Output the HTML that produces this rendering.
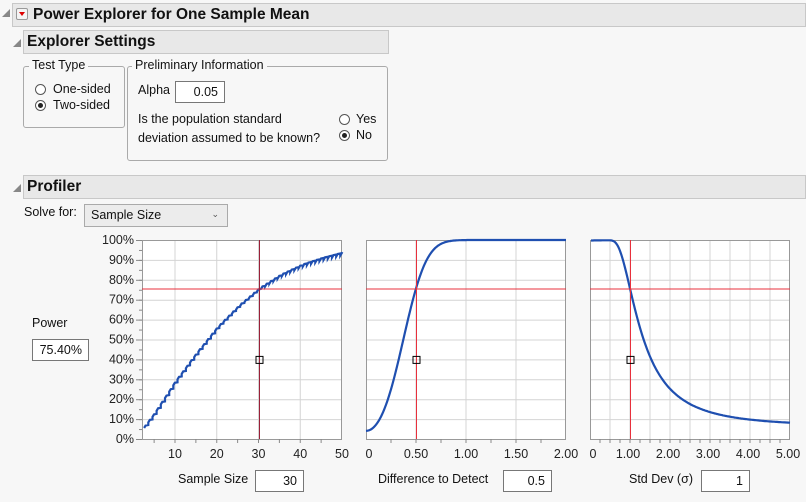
<!DOCTYPE html>
<html><head><meta charset="utf-8"><style>
body{margin:0;width:806px;height:502px;background:#f7f7f7;font-family:"Liberation Sans",sans-serif;font-size:12.5px;color:#111;position:relative;overflow:hidden}
.a{position:absolute}
.bar{position:absolute;background:#e8e8e8;border:1px solid #c8c8c8;font-weight:bold;box-sizing:border-box}
.tri{position:absolute;width:0;height:0;border-left:8px solid transparent;border-bottom:8px solid #888}
.box{position:absolute;background:#fff;border:1px solid #777;box-sizing:border-box;text-align:right;padding-right:6px}
.grp{position:absolute;border:1px solid #aaa;border-radius:3px;box-sizing:border-box}
.lg{position:absolute;background:#f7f7f7;padding:0 3px}
.rad{position:absolute;width:11px;height:11px;border:1px solid #555;border-radius:50%;background:#fff;box-sizing:border-box}
.rad.on::after{content:"";position:absolute;left:2px;top:2px;width:5px;height:5px;border-radius:50%;background:#222}
</style></head><body>
<div class="tri a" style="left:2px;top:9px"></div>
<div class="bar" style="left:12px;top:3px;width:794px;height:24px;font-size:15.5px;line-height:22px;padding-left:20px">Power Explorer for One Sample Mean</div>
<div class="a" style="left:16px;top:8px;width:12px;height:12px;border:1px solid #999;border-radius:2px;background:#f4f4f4;box-sizing:border-box"><div style="position:absolute;left:2px;top:3px;border-left:3px solid transparent;border-right:3px solid transparent;border-top:4px solid #d00"></div></div>
<div class="tri a" style="left:13px;top:39px"></div>
<div class="bar" style="left:23px;top:30px;width:366px;height:24px;font-size:15.5px;line-height:22px;padding-left:3px">Explorer Settings</div>

<div class="grp" style="left:23px;top:66px;width:102px;height:62px"></div>
<div class="lg" style="left:29px;top:58px">Test Type</div>
<div class="rad" style="left:35px;top:84px"></div><div class="a" style="left:53px;top:82px">One-sided</div>
<div class="rad on" style="left:35px;top:100px"></div><div class="a" style="left:53px;top:98px">Two-sided</div>

<div class="grp" style="left:127px;top:66px;width:261px;height:95px"></div>
<div class="lg" style="left:132px;top:58px">Preliminary Information</div>
<div class="a" style="left:138px;top:83px">Alpha</div>
<div class="box" style="left:175px;top:81px;width:50px;height:22px;line-height:20px">0.05</div>
<div class="a" style="left:138px;top:110px;line-height:19px">Is the population standard<br>deviation assumed to be known?</div>
<div class="rad" style="left:339px;top:114px"></div><div class="a" style="left:356px;top:112px">Yes</div>
<div class="rad on" style="left:339px;top:130px"></div><div class="a" style="left:356px;top:128px">No</div>

<div class="tri a" style="left:13px;top:184px"></div>
<div class="bar" style="left:23px;top:175px;width:783px;height:24px;font-size:15.5px;line-height:22px;padding-left:3px">Profiler</div>
<div class="a" style="left:24px;top:205px">Solve for:</div>
<div class="a" style="left:84px;top:204px;width:144px;height:23px;border:1px solid #aaa;background:#ececec;box-sizing:border-box;padding-left:6px;line-height:21px">Sample Size<span style="position:absolute;right:8px;top:-1px;font-size:9px;color:#555">&#8964;</span></div>

<div class="a" style="left:32px;top:316px">Power</div>
<div class="box" style="left:32px;top:339px;width:57px;height:22px;line-height:20px">75.40%</div>

<svg class="a" style="left:0;top:0" width="806" height="502" id="s"></svg>

<div class="a" style="left:178px;top:472px">Sample Size</div>
<div class="box" style="left:255px;top:470px;width:49px;height:22px;line-height:20px">30</div>
<div class="a" style="left:378px;top:472px">Difference to Detect</div>
<div class="box" style="left:503px;top:470px;width:49px;height:22px;line-height:20px">0.5</div>
<div class="a" style="left:629px;top:472px">Std Dev (σ)</div>
<div class="box" style="left:701px;top:470px;width:49px;height:22px;line-height:20px">1</div>

<script>
var s=document.getElementById('s'),h='';
function L(x1,y1,x2,y2,c,w){h+='<line x1="'+x1+'" y1="'+y1+'" x2="'+x2+'" y2="'+y2+'" stroke="'+c+'" stroke-width="'+(w||1)+'"/>';}
function T(x,y,t,a){h+='<text x="'+x+'" y="'+y+'" font-family="Liberation Sans,sans-serif" font-size="12.5" fill="#222" text-anchor="'+(a||'middle')+'">'+t+'</text>';}
function Phi(z){var t=1/(1+0.2316419*Math.abs(z)),d=0.3989423*Math.exp(-z*z/2),p=d*t*(0.3193815+t*(-0.3565638+t*(1.781478+t*(-1.821256+t*1.330274))));return z>0?1-p:p;}
function tc(df){return 1.96+2.37/df+2.8/(df*df);}
function pw(d,n){var c=tc(n-1),m=d*Math.sqrt(n);return Phi(m-c)+Phi(-m-c);}
var A=[[2.5,.06],[5,.13],[10,.29],[15,.43],[20,.56],[25,.665],[30,.754],[35,.82],[40,.87],[45,.905],[50,.932]];
function f(n){for(var i=0;i<A.length-1;i++){if(n<=A[i+1][0]){var t=(n-A[i][0])/(A[i+1][0]-A[i][0]);return A[i][1]+t*(A[i+1][1]-A[i][1]);}}return .932;}
var T0=240,B=439;
function Y(p){return B-p*(B-T0);}
var P=[[142,342],[366,566],[590,790]];
P.forEach(function(q,i){
 h+='<rect x="'+q[0]+'" y="'+T0+'" width="200" height="199" fill="#fff"/>';
 for(var k=1;k<10;k++)L(q[0],Y(k/10)+.5,q[1],Y(k/10)+.5,'#d4d4d4');
});
[10,20,30,40].forEach(function(n){var x=141.6+(n-2)*4.175;L(x,T0,x,B,'#d4d4d4');});
[.5,1,1.5].forEach(function(v){L(366+v*100,T0,366+v*100,B,'#d4d4d4');});
for(var v=.5;v<5;v+=.5)L(590+v*40,T0,590+v*40,B,'#d4d4d4');
P.forEach(function(q){h+='<rect x="'+(q[0]+.5)+'" y="'+(T0+.5)+'" width="199" height="199" fill="none" stroke="#999"/>';});
for(var k=0;k<=10;k++){T(134,Y(k/10)+4,(k*10)+'%','end');L(136,Y(k/10)+.5,142,Y(k/10)+.5,'#888');}
for(var k=0;k<20;k++){L(139,Y(k/20)+.5,142,Y(k/20)+.5,'#888');}
[10,20,30,40,50].forEach(function(n){T(141.6+(n-2)*4.175,458,n);});
for(var n=5;n<50;n+=5)L(141.6+(n-2)*4.175,B,141.6+(n-2)*4.175,B+4,'#888');
[['0',0],['0.50',.5],['1.00',1],['1.50',1.5],['2.00',2]].forEach(function(a){T(366+a[1]*100+(a[1]==0?3:0),458,a[0]);});
for(var v=.25;v<2;v+=.25)L(366+v*100,B,366+v*100,B+4,'#888');
[['0',0],['1.00',1],['2.00',2],['3.00',3],['4.00',4],['5.00',5]].forEach(function(a){T(590+a[1]*40+(a[1]==0?3:-2),458,a[0]);});
for(var v=.25;v<5;v+=.25)L(590+v*40,B,590+v*40,B+4,'#888');
var d='';
for(var n=2.6;n<=49.6;n+=1){var x0=141.6+(n-2)*4.175,x1=Math.min(x0+4.175,341),y=Y(f(n));d+=(n<3?'M':'L')+x0.toFixed(1)+' '+(y+1.5).toFixed(1)+'L'+(x0+1.5).toFixed(1)+' '+(y-1).toFixed(1)+'L'+x1.toFixed(1)+' '+(y-1.5).toFixed(1);}
h+='<path d="'+d+'" fill="none" stroke="#1f4fb0" stroke-width="2.2"/>';
d='';for(var x=0;x<=200;x++){var v=x/100;d+=(x?'L':'M')+(366+x)+' '+Y(pw(v,30)).toFixed(1);}
h+='<path d="'+d+'" fill="none" stroke="#1f4fb0" stroke-width="2.2"/>';
d='';for(var x=1;x<=200;x++){var v=x/40;d+=(x>1?'L':'M')+(590+x)+' '+Y(Math.min(1,pw(.5/v,30)+0.01*(v-1)/4)).toFixed(1);}
h+='<path d="'+d+'" fill="none" stroke="#1f4fb0" stroke-width="2.2"/>';
var yh=Y(.754);
[[259,142,342],[416,366,566],[630,590,790]].forEach(function(c){L(c[1],yh,c[2],yh,'#e8303c');L(c[0]+.5,T0,c[0]+.5,B,c[0]==259?'#9a2038':'#e8303c');
h+='<rect x="'+(c[0]-3)+'" y="'+(Y(.4)-3)+'" width="7" height="7" fill="none" stroke="#000"/>';});
s.innerHTML=h;
</script>
</body></html>
